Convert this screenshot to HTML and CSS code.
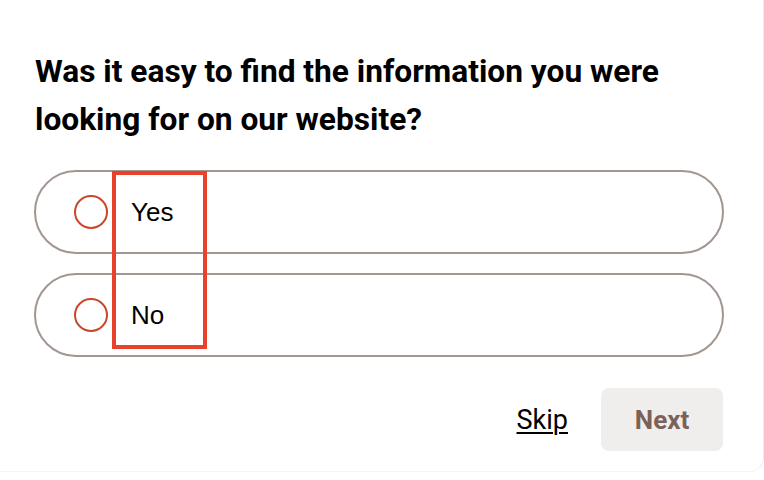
FILE: index.html
```html
<!DOCTYPE html>
<html lang="en">
<head>
  <meta charset="UTF-8" />
  <meta name="viewport" content="width=device-width, initial-scale=1.0"/>
  <title>Survey</title>
  <link rel="stylesheet" href="styles.css">
</head>
<body>
  <div class="card">
    <h1 class="question">Was it easy to find the information you were looking for on our website?</h1>

    <div class="options">
      <label class="option">
        <span class="radio"></span>
        <span class="option-text">Yes</span>
      </label>
      <label class="option">
        <span class="radio"></span>
        <span class="option-text">No</span>
      </label>
      <div class="highlight"></div>
    </div>

    <div class="actions">
      <a href="#" class="skip">Skip</a>
      <button class="next">Next</button>
    </div>
  </div>
</body>
</html>
```

FILE: styles.css
```css
:root {
  --text: #000000;
  --pill-border: #a39690;
  --radio: #c9472b;
  --mark: #e8432a;
  --btn-bg: #f0eeec;
  --btn-text: #7b6259;
}

body {
  margin: 0;
  background: #ffffff;
  font-family: Roboto, "Liberation Sans", Arial, sans-serif;
  color: var(--text);
}

.card {
  width: 764px;
  height: 472px;
  box-sizing: border-box;
  padding: 48px 39px 0 34px;
  border-right: 1px solid #ececec;
  border-bottom: 1px solid #f5f5f5;
  border-bottom-right-radius: 14px;
}

.question {
  margin: 0 0 26px 1px;
  font-size: 31.7px;
  line-height: 48px;
  font-weight: 700;
  width: 680px;
}

.options {
  position: relative;
  display: flex;
  flex-direction: column;
  gap: 19px;
}

.option {
  display: flex;
  align-items: center;
  gap: 23px;
  height: 84px;
  box-sizing: border-box;
  padding-left: 38px;
  border: 2px solid var(--pill-border);
  border-radius: 42px;
}

.radio {
  width: 34px;
  height: 34px;
  box-sizing: border-box;
  border: 2px solid var(--radio);
  border-radius: 50%;
}

.option-text {
  font-family: "Liberation Sans", Arial, sans-serif;
  font-size: 26px;
  padding-top: 1px;
}

/* annotation box drawn over the labels */
.highlight {
  position: absolute;
  left: 78px;
  top: 1px;
  width: 95px;
  height: 178px;
  box-sizing: border-box;
  border: 4px solid var(--mark);
}

.actions {
  display: flex;
  justify-content: flex-end;
  align-items: center;
  gap: 33px;
  margin: 31px 1px 0 0;
}

.skip {
  color: var(--text);
  font-size: 27px;
  text-decoration: underline;
  text-underline-offset: 3px;
  text-decoration-thickness: 2px;
}

.next {
  width: 122px;
  height: 63px;
  border: none;
  border-radius: 8px;
  background: var(--btn-bg);
  color: var(--btn-text);
  font-family: Roboto, sans-serif;
  font-size: 26px;
  font-weight: 700;
}
```
